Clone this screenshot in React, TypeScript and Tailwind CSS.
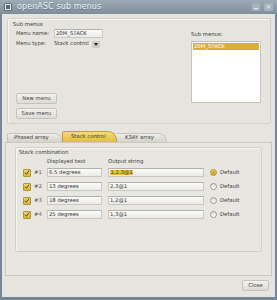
import React from "react";

// ─── Data ─────────────────────────────────────────────────────────────────────

const ROWS = [
  { id: "#1", text: "6.5 degrees", output: "1,2,3@1", selected: true },
  { id: "#2", text: "13 degrees", output: "2,3@1", selected: false },
  { id: "#3", text: "18 degrees", output: "1,2@1", selected: false },
  { id: "#4", text: "25 degrees", output: "1,3@1", selected: false },
] as const;

const inputClass =
  "flex h-[9px] items-center border border-[#cbc8c1] border-t-[#b3b0a8] bg-gradient-to-b from-[#fbfbfa] to-[#ebeae6] px-[1px] text-[#333]";

const buttonClass =
  "flex items-center justify-center rounded-[2px] border border-[#c6c3bb] bg-gradient-to-b from-[#f3f2ef] to-[#dcdad4] text-[#444]";

// ─── Small drawings ───────────────────────────────────────────────────────────

function CheckBox() {
  return (
    <div className="flex h-[8px] w-[8px] items-center justify-center rounded-[1px] border border-[#b3952f] bg-gradient-to-b from-[#f0d36a] to-[#d9b43c]">
      <svg viewBox="0 0 8 8" className="h-[7px] w-[7px]" aria-hidden="true">
        <path d="M1.2 4.2 L3.2 6.2 L6.8 1.4" fill="none" stroke="#4a4229" strokeWidth={1.3} />
      </svg>
    </div>
  );
}

function Radio({ on }: { on: boolean }) {
  return on ? (
    <div className="flex h-[7px] w-[7px] items-center justify-center rounded-full border border-[#b0912f] bg-gradient-to-b from-[#f3d970] to-[#d8ae34]">
      <div className="h-[3px] w-[3px] rounded-full bg-[#c99d28]" />
    </div>
  ) : (
    <div className="h-[7px] w-[7px] rounded-full border border-[#9a978f] bg-gradient-to-b from-[#dcdad5] to-[#ffffff]" />
  );
}

// ─── Component ────────────────────────────────────────────────────────────────

export default function App() {
  return (
    <div className="flex h-[300px] w-[277px] flex-col bg-[#74869a] font-['DejaVu_Sans',sans-serif] text-[5.3px] leading-none text-[#3a3a3a]">
      {/* ── Title bar ─────────────────────────────────────────────────────── */}
      <div className="flex h-[14px] items-center bg-gradient-to-b from-[#9eabb6] to-[#7f8e9b] pl-[4px] pr-[4px]">
        <div className="flex h-[8px] w-[8px] items-center justify-center rounded-[1px] border border-[#5d6a75] bg-[#e8ebee]">
          <div className="h-[4px] w-[4px] bg-[#5a6470]" />
        </div>
        <span className="ml-[5px] text-[8px] tracking-[0.1px] text-[#eef1f4] [text-shadow:0_1px_0_#6c7a86]">
          openASC sub menus
        </span>
        <div className="ml-auto flex items-center gap-[4px]">
          <div className="flex h-[8px] w-[8px] items-end justify-center rounded-[1px] bg-[#a5b2bd] pb-[2px]">
            <div className="h-[1px] w-[4px] bg-[#eef1f4]" />
          </div>
          <div className="flex h-[8px] w-[9px] items-center justify-center rounded-[1px] bg-[#a5b2bd] text-[7px] text-[#eef1f4]">
            ×
          </div>
        </div>
      </div>

      {/* ── Window body ───────────────────────────────────────────────────── */}
      <div className="mx-[2px] mb-[3px] flex flex-1 flex-col bg-[#e6e4de]">
        {/* Sub menus group */}
        <div className="ml-[5px] mr-[4px] mt-[4px] flex h-[106px] flex-col rounded-[2px] border border-[#d3d0c8] shadow-[inset_1px_1px_0_#f6f5f2]">
          <div className="mt-[2px] flex h-[7px] items-center pl-[5px]">Sub menus</div>
          <div className="flex flex-1">
            <div className="flex flex-col pl-[8px]">
              <div className="mt-[1px] flex h-[9px] items-center">
                <span className="w-[38px]">Menu name:</span>
                <div className={`${inputClass} w-[49px]`}>20M_STACK</div>
              </div>
              <div className="mt-[2px] flex h-[8px] items-center">
                <span className="w-[38px]">Menu type:</span>
                <span className="w-[38px]">Stack control</span>
                <div className="flex h-[7px] w-[8px] items-center justify-center rounded-[1px] bg-[#cfccc5]">
                  <div className="h-0 w-0 border-x-[2.5px] border-t-[3px] border-x-transparent border-t-[#222]" />
                </div>
              </div>
              <div className={`${buttonClass} mt-[45px] h-[11px] w-[41px]`}>New menu</div>
              <div className={`${buttonClass} mt-[4px] h-[11px] w-[41px]`}>Save menu</div>
            </div>
            <div className="ml-auto mr-[9px] flex w-[70px] flex-col">
              <div className="mt-[3px] flex h-[8px] items-center">Sub menus:</div>
              <div className="mt-[2px] h-[62px] border border-[#c6c3bb] bg-white p-[1px]">
                <div className="flex h-[7px] items-center bg-[#d8b038] pl-[1px] text-white">20M_STACK</div>
              </div>
            </div>
          </div>
        </div>

        {/* Tabs */}
        <div className="ml-[5px] mt-[7px] flex h-[11px] items-end">
          <div className="flex h-[9px] w-[56px] items-center rounded-tl-[2px] rounded-tr-[9px] border border-b-0 border-[#c6c3bb] bg-gradient-to-b from-[#eeede9] to-[#d3d1ca] pl-[6px]">
            Phased array
          </div>
          <div className="-ml-[1px] flex h-[11px] w-[55px] items-center rounded-tl-[2px] rounded-tr-[9px] border border-b-0 border-[#c0a036] bg-gradient-to-b from-[#f3da7c] to-[#e2bd47] pl-[8px]">
            Stack control
          </div>
          <div className="flex h-[9px] w-[50px] items-center rounded-tr-[9px] border border-b-0 border-l-0 border-[#c6c3bb] bg-gradient-to-b from-[#eeede9] to-[#d3d1ca] pl-[8px]">
            K3AY array
          </div>
        </div>

        {/* Tab panel */}
        <div className="mx-[3px] flex h-[134px] flex-col border border-[#cbc8c0] bg-[#e8e6e1]">
          <div className="ml-[9px] mr-[9px] mt-[4px] flex h-[105px] flex-col rounded-[2px] border border-[#d3d0c8] shadow-[inset_1px_1px_0_#f6f5f2]">
            <div className="mt-[1px] flex h-[7px] items-center pl-[3px]">Stack combination</div>
            <div className="mt-[2px] flex h-[7px] items-center pl-[31px]">
              <span className="w-[61px]">Displayed text</span>
              <span>Output string</span>
            </div>
            <div className="mt-[3px] flex flex-col gap-[5px]">
              {ROWS.map((row) => (
                <div key={row.id} className="flex h-[9px] items-center pl-[7px]">
                  <CheckBox />
                  <span className="ml-[3px] w-[13px] text-[#555]">{row.id}</span>
                  <div className={`${inputClass} w-[55px]`}>{row.text}</div>
                  <div className={`${inputClass} ml-[6px] w-[96px]`}>
                    <span className={row.selected ? "bg-[#e8c23e] px-[0.5px]" : ""}>{row.output}</span>
                  </div>
                  <div className="ml-[6px]">
                    <Radio on={row.selected} />
                  </div>
                  <span className="ml-[3px]">Default</span>
                </div>
              ))}
            </div>
          </div>
        </div>

        {/* Bottom button */}
        <div className={`${buttonClass} ml-auto mr-[6px] mt-[4px] h-[11px] w-[27px]`}>Close</div>
      </div>
    </div>
  );
}
